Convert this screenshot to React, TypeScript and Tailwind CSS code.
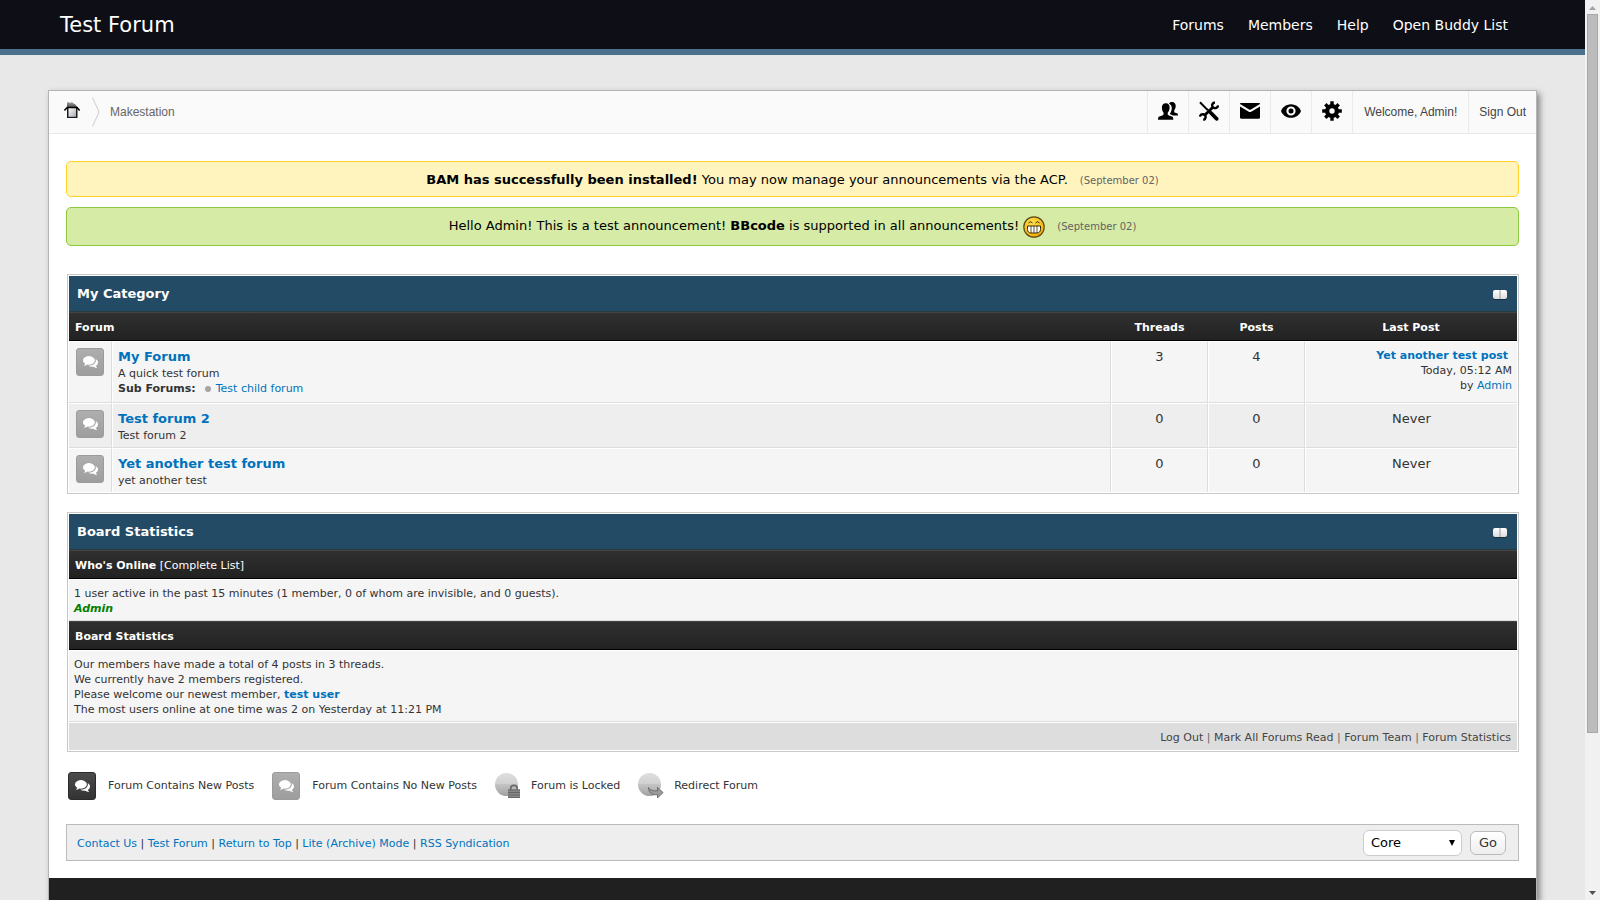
import type { ReactNode } from "react";

const link = "text-[#0072bc] hover:underline";

function UsersIcon() {
  return (
    <svg viewBox="0 0 20 20" className="size-5" fill="#000" aria-hidden="true">
      <path d="M7.8 2.2c2.6 0 3.9 1.8 3.8 4.4 0 2.2-.9 4.1-1.9 5.1v1.4c0 .7.4 1 1.200 1.300l3 1.200c1 .4 1.400 1.100 1.400 3.200H0c0-2.100.4-2.800 1.400-3.200l3-1.200c.8-.3 1.200-.6 1.200-1.300v-1.400c-1-1-1.700-2.900-1.700-5.100 0-2.600 1.300-4.400 3.900-4.400z" />
      <path d="M11 2.700c.8-1.200 1.800-1.600 3.100-1.600 2.400 0 3.700 1.700 3.600 4 0 2-.8 3.400-1.500 4.300v1.300c0 .6.5.8 1.100 1l1.600.6c.8.300 1.100.900 1.100 2.200h-5.200c-.8-.6-1.800-.9-2.700-1.200v-1c1.100-1.500 1.700-3.200 1.700-5.300 0-2-.9-3.500-2.800-4.300z" />
    </svg>
  );
}

function ToolsIcon() {
  return (
    <svg viewBox="0 0 20 20" className="size-5" fill="none" stroke="#000" aria-hidden="true">
      <path d="M1 1.300l7.700 7.800" strokeWidth="2" />
      <path d="M12 12l5.600 5.800" strokeWidth="3.800" strokeLinecap="round" />
      <path d="M8 8l4 4" strokeWidth="1.400" />
      <path d="M6.400 13.600l7.200-7.200" strokeWidth="2.800" />
      <path d="M15.900 1.500c-2 .3-3.100 1.900-2.600 3.700.4 1.600 2.400 2.400 4.200 1.500 1-.5 1.500-1.300 1.600-2.300" strokeWidth="2.400" />
      <path d="M.9 15.600c.3-1.400 1.400-2.400 2.900-2.400 1.800 0 3 1.500 2.800 3.100-.2 1.400-1 2.300-2.300 2.700" strokeWidth="2.400" />
    </svg>
  );
}

function MailIcon() {
  return (
    <svg viewBox="0 0 20 20" className="size-5" fill="#000" aria-hidden="true">
      <path d="M.6 2h18.800c.6 0 .8.800.2 1.200l-8.700 5.300c-.6.3-1.200.3-1.800 0L.4 3.200C-.2 2.800 0 2 .6 2z" />
      <path d="M0 5.400l8.800 5.300c.8.400 1.600.4 2.400 0L20 5.400v11.100c0 .8-.4 1.200-1.200 1.200H1.200c-.8 0-1.200-.4-1.200-1.200z" />
    </svg>
  );
}

function EyeIcon() {
  return (
    <svg viewBox="0 0 20 20" className="size-5" fill="#000" aria-hidden="true">
      <path
        fillRule="evenodd"
        d="M10 3.200c5.300 0 9 3.900 9.800 6.400.1.300.1.500 0 .8-.8 2.500-4.500 6.400-9.800 6.400S1 12.900.2 10.400a1 1 0 010-.8C1 7.100 4.700 3.200 10 3.200zm0 2.200a4.600 4.600 0 100 9.200 4.600 4.600 0 000-9.200z"
      />
      <circle cx="10" cy="10" r="2.500" />
    </svg>
  );
}

function GearIcon() {
  return (
    <svg viewBox="0 0 20 20" className="size-5" aria-hidden="true">
      <g stroke="#000" strokeWidth="3.400">
        <path d="M10 .2v19.600M.2 10h19.600" />
        <path d="M3.300 3.300l13.400 13.400M3.300 16.700L16.700 3.300" />
      </g>
      <circle cx="10" cy="10" r="7" fill="#000" />
      <circle cx="10" cy="10" r="2.700" fill="#fafafa" />
    </svg>
  );
}

function HomeIcon() {
  return (
    <svg viewBox="0 0 16 16" className="size-4" aria-hidden="true">
      <defs>
        <linearGradient id="wall" x1="0" y1="0" x2="1" y2="1">
          <stop offset="0" stopColor="#fff" />
          <stop offset="1" stopColor="#a4aab2" />
        </linearGradient>
        <linearGradient id="roof" x1="0" y1="0" x2="0" y2="1">
          <stop offset="0" stopColor="#a0a0a0" />
          <stop offset="1" stopColor="#444" />
        </linearGradient>
      </defs>
      <path d="M3 5h10.500v11H3z" fill="#1c1c1c" />
      <path d="M4.500 6h7.500v8.800H4.500z" fill="url(#wall)" />
      <path d="M3 .5L4.500 0 6 1l2-1 1.500 1.500L11 2l3 4H3z" fill="url(#roof)" />
      <path d="M.4 8.500L3.200 5.600h9.800l2.600 2.900" fill="none" stroke="#000" strokeWidth="1.500" />
    </svg>
  );
}

function GrinIcon() {
  return (
    <svg viewBox="0 0 22 22" className="-my-2 inline size-[22px] align-middle" role="img" aria-label="Big Grin">
      <defs>
        <radialGradient id="face" cx=".4" cy=".3" r=".8">
          <stop offset="0" stopColor="#ffe14a" />
          <stop offset="1" stopColor="#f5a800" />
        </radialGradient>
      </defs>
      <circle cx="11" cy="11" r="10.200" fill="url(#face)" stroke="#5c4a17" strokeWidth="1.200" />
      <path d="M5.500 7l2-1.300L9.500 7M12.500 7l2-1.300 2 1.300" fill="none" stroke="#3a2c05" />
      <path d="M4.500 10h13v3.500c0 2.200-1.600 3.500-3.500 3.500H8c-2 0-3.500-1.300-3.500-3.500z" fill="#fff" stroke="#3a2c05" />
      <path d="M8 10v7M11 10v7M14 10v7" stroke="#3a2c05" strokeWidth=".8" />
    </svg>
  );
}

function CommentsIcon() {
  return (
    <svg viewBox="0 256 1792 1408" className="h-3 w-[15px]" fill="currentColor" aria-hidden="true">
      <path d="M1408 768q0 139-94 257t-256.500 186.500-353.500 68.500q-86 0-176-16-124 88-278 128-36 9-86 16h-3q-11 0-20.500-8t-11.500-21q-1-3-1-6.500t.5-6.500 2-6l2.500-5 3.500-5.500 4-5 4.500-5 4-4.500q5-6 23-25t26-29.500 22.500-29 25-38.500 20.500-44q-124-72-195-177t-71-224q0-139 94-257t256.500-186.500 353.500-68.500 353.500 68.500 256.500 186.500 94 257zm384 256q0 120-71 224.500t-195 176.500q10 24 20.500 44t25 38.500 22.500 29 26 29.500 23 25q1 1 4 4.500t4.500 5 4 5 3.500 5.500l2.500 5 2 6 .5 6.500-1 6.500q-3 14-13 22t-22 7q-50-7-86-16-154-40-278-128-90 16-176 16-271 0-472-132 58 4 88 4 161 0 309-45t264-129q125-92 192-212t67-254q0-77-23-152 129 71 204 178t75 230z" />
    </svg>
  );
}

function CollapseIcon() {
  return (
    <svg viewBox="0 0 14 10" className="h-[10px] w-[14px]" aria-hidden="true">
      <defs>
        <linearGradient id="knob" x1="0" y1="0" x2="0" y2="1">
          <stop offset="0" stopColor="#fff" />
          <stop offset="1" stopColor="#ddd" />
        </linearGradient>
      </defs>
      <rect x="0" y="1" width="14" height="9" rx="2" fill="#17303f" />
      <rect x="0" y="0" width="14" height="9" rx="2" fill="url(#knob)" />
      <path d="M7 0v9" stroke="#999" />
    </svg>
  );
}

function Ball({ id, children }: { id: string; children: ReactNode }) {
  return (
    <svg viewBox="0 0 26 26" className="size-[26px]" aria-hidden="true">
      <defs>
        <linearGradient id={id} x1="0" y1="0" x2="0" y2="1">
          <stop offset="0" stopColor="#dedede" />
          <stop offset=".45" stopColor="#d2d2d2" />
          <stop offset=".5" stopColor="#c3c3c3" />
          <stop offset="1" stopColor="#a2a2a2" />
        </linearGradient>
      </defs>
      <circle cx="11.500" cy="11.500" r="11.500" fill={`url(#${id})`} />
      {children}
    </svg>
  );
}

function LockedIcon() {
  return (
    <Ball id="locked">
      <path d="M15.800 17v-2c0-1.700 1.300-2.700 3.200-2.700s3.200 1 3.200 2.700v2" fill="none" stroke="#6a6a6a" strokeWidth="1.700" />
      <path d="M13 16.500h12V25H13z" fill="#888" />
      <path d="M13 17h12M13 19.500h12M13 22h12M13 24.500h12" stroke="#666" />
    </Ball>
  );
}

function RedirectIcon() {
  return (
    <Ball id="redirect">
      <path
        d="M10.500 14.500c1.500 2.800 4.500 3.700 9 3.300V14.500l5.500 5-5.500 5.500v-3.200c-5 .2-9-1.300-9-7.300z"
        fill="#9a9a9a"
        stroke="#666"
        strokeWidth=".9"
      />
    </Ball>
  );
}

function StatusIcon({ unread = false }: { unread?: boolean }) {
  const tone = unread
    ? "border-[#2b2b2b] from-[#4b4b4b] to-[#333333]"
    : "border-[#9b9b9b] from-[#aeaeae] to-[#9e9e9e]";
  return (
    <span className={`flex size-7 items-center justify-center rounded-[3px] border bg-linear-to-b text-white ${tone}`}>
      <CommentsIcon />
    </span>
  );
}

function Announcement({ tone, date, children }: { tone: string; date: string; children: ReactNode }) {
  return (
    <div className={`rounded-[5px] border px-2 text-center text-[13px] leading-[20px] text-black ${tone}`}>
      {children}
      <span className="ml-3 text-[10px] leading-none text-[#636363]">({date})</span>
    </div>
  );
}

function TitleBar({ span, children }: { span: number; children: ReactNode }) {
  return (
    <tr>
      <th colSpan={span} className="border-b border-[#263c40] bg-[#244b65] px-2 text-left text-[13px] text-white">
        <div className="flex h-[35px] items-center justify-between">
          <span>{children}</span>
          <button type="button" aria-label="Collapse" className="mr-[2px] mt-[3px]">
            <CollapseIcon />
          </button>
        </div>
      </th>
    </tr>
  );
}

const bar =
  "border-t border-b border-t-[#444] border-b-black bg-linear-to-b from-[#303030] to-[#222] px-[6px] pt-[7px] pb-[5px] text-white";
const cell = "border-t border-t-white border-b-[#ddd] px-[5px] pt-[6px] pb-1 align-top";

type Forum = { name: string; text: string; child?: string; threads: number; posts: number };

const forums: Forum[] = [
  { name: "My Forum", text: "A quick test forum", child: "Test child forum", threads: 3, posts: 4 },
  { name: "Test forum 2", text: "Test forum 2", threads: 0, posts: 0 },
  { name: "Yet another test forum", text: "yet another test", threads: 0, posts: 0 },
];

function ForumRow({ forum, index }: { forum: Forum; index: number }) {
  const bottom = index < forums.length - 1 ? "border-b" : "";
  const shared = `${cell} ${bottom}`;
  const inner = "border-l border-l-white";
  const right = "border-r border-r-[#ddd]";
  return (
    <tr className={index % 2 ? "bg-[#eeeeee]" : "bg-[#f5f5f5]"}>
      <td className={`${shared} ${right}`}>
        <div className="flex justify-center">
          <StatusIcon />
        </div>
      </td>
      <td className={`${shared} ${inner} ${right}`}>
        <a href="#" className={`block text-[13px] leading-[18px] font-bold ${link}`}>
          {forum.name}
        </a>
        <div>{forum.text}</div>
        {forum.child && (
          <div className="mb-[2px] flex items-center gap-[9px]">
            <strong>Sub Forums:</strong>
            <span className="flex items-center gap-[5px]">
              <span className="size-[6px] rounded-full bg-[#a5a5a5]" />
              <a href="#" className={link}>
                {forum.child}
              </a>
            </span>
          </div>
        )}
      </td>
      <td className={`${shared} ${inner} ${right} text-center text-[13px] leading-[18px]`}>{forum.threads}</td>
      <td className={`${shared} ${inner} ${right} text-center text-[13px] leading-[18px]`}>{forum.posts}</td>
      {forum.child ? (
        <td className={`${shared} ${inner} text-right`}>
          <a href="#" className={`mr-1 font-bold ${link}`}>
            Yet another test post
          </a>
          <br />
          Today, 05:12 AM
          <br />
          by{" "}
          <a href="#" className={link}>
            Admin
          </a>
        </td>
      ) : (
        <td className={`${shared} ${inner} text-center text-[13px] leading-[18px]`}>Never</td>
      )}
    </tr>
  );
}

function LinkList({ items, className }: { items: string[]; className: string }) {
  return (
    <>
      {items.map((item, i) => (
        <span key={item}>
          {i > 0 && " | "}
          <a href="#" className={className}>
            {item}
          </a>
        </span>
      ))}
    </>
  );
}

const tools = [
  { label: "Buddies", icon: <UsersIcon /> },
  { label: "Moderation", icon: <ToolsIcon /> },
  { label: "Messages", icon: <MailIcon /> },
  { label: "New posts", icon: <EyeIcon /> },
  { label: "Settings", icon: <GearIcon /> },
];

const tableClass =
  "w-full table-fixed border-separate border-spacing-0 border border-[#c8c8c8] bg-white p-px";

export default function App() {
  return (
    <div className="flex h-screen bg-[#e8e8e8] font-['DejaVu_Sans',sans-serif] text-[11px] leading-[15px] text-[#333]">
      <div className="flex min-w-0 flex-1 flex-col overflow-hidden">
        <header className="flex h-[55px] shrink-0 items-center justify-between border-b-6 border-[#4a708b] bg-[#0d0e16] pr-[77px] pl-[60px] text-white">
          <a href="#" className="text-[21px] leading-6">
            Test Forum
          </a>
          <nav className="flex gap-6 text-[14px] leading-5">
            <a href="#">Forums</a>
            <a href="#">Members</a>
            <a href="#">Help</a>
            <a href="#">Open Buddy List</a>
          </nav>
        </header>

        <main className="mx-12 mt-[35px] flex flex-1 flex-col border border-b-0 border-[#b5b5b5] bg-white shadow-[3px_3px_6px_#888]">
          <div className="flex h-[43px] shrink-0 justify-between border-b border-[#eaeaea] bg-[#fafafa] font-['Liberation_Sans',sans-serif] text-[12px]">
            <div className="flex items-center pl-[15px] text-[#666]">
              <a href="#" aria-label="Home" className="pb-[5px]">
                <HomeIcon />
              </a>
              <svg viewBox="0 0 8 30" className="ml-3 h-[30px] w-2" fill="none" stroke="#ccc" aria-hidden="true">
                <path d="M.5.500L7 15 .5 29.500" />
              </svg>
              <a href="#" className="ml-[10px]">
                Makestation
              </a>
            </div>
            <div className="flex text-[#444]">
              {tools.map((tool) => (
                <a
                  key={tool.label}
                  href="#"
                  aria-label={tool.label}
                  className="flex items-center border-l border-[#eaeaea] px-[10px] pb-[2px]"
                >
                  {tool.icon}
                </a>
              ))}
              <a href="#" className="flex items-center border-l border-[#eaeaea] px-[11px]">
                Welcome, Admin!
              </a>
              <a href="#" className="flex items-center border-l border-[#eaeaea] px-[10px]">
                Sign Out
              </a>
            </div>
          </div>

          <div className="px-[17px] pt-[27px] pb-[17px]">
            <Announcement tone="border-[#ffd324] bg-[#fff4be] pt-2 pb-[6px]" date="September 02">
              <strong>BAM has successfully been installed!</strong> You may now manage your announcements via the ACP.
            </Announcement>
            <div className="h-[10px]" />
            <Announcement tone="border-[#8dc93e] bg-[#d6eba5] pt-2 pb-[9px]" date="September 02">
              Hello Admin! This is a test announcement! <strong>BBcode</strong> is supported in all announcements!{" "}
              <GrinIcon />
            </Announcement>

            <div className="mt-7 ml-px">
              <table className={tableClass}>
                <colgroup>
                  <col className="w-[43px]" />
                  <col />
                  <col className="w-[97px]" />
                  <col className="w-[97px]" />
                  <col className="w-[212px]" />
                </colgroup>
                <thead>
                  <TitleBar span={5}>My Category</TitleBar>
                  <tr>
                    <th colSpan={2} className={`${bar} text-left`}>
                      Forum
                    </th>
                    <th className={bar}>Threads</th>
                    <th className={bar}>Posts</th>
                    <th className={bar}>Last Post</th>
                  </tr>
                </thead>
                <tbody>
                  {forums.map((forum, i) => (
                    <ForumRow key={forum.name} forum={forum} index={i} />
                  ))}
                </tbody>
              </table>

              <table className={`${tableClass} mt-[18px]`}>
                <thead>
                  <TitleBar span={1}>Board Statistics</TitleBar>
                </thead>
                <tbody>
                  <tr>
                    <td className={bar}>
                      <strong>Who's Online</strong> [<a href="#">Complete List</a>]
                    </td>
                  </tr>
                  <tr>
                    <td className={`${cell} border-b bg-[#f5f5f5]`}>
                      1 user active in the past 15 minutes (1 member, 0 of whom are invisible, and 0 guests).
                      <br />
                      <a href="#" className="font-bold text-[#008000] italic">
                        Admin
                      </a>
                    </td>
                  </tr>
                  <tr>
                    <th className={`${bar} text-left`}>Board Statistics</th>
                  </tr>
                  <tr>
                    <td className={`${cell} border-b bg-[#f5f5f5]`}>
                      Our members have made a total of 4 posts in 3 threads.
                      <br />
                      We currently have 2 members registered.
                      <br />
                      Please welcome our newest member,{" "}
                      <a href="#" className={`font-bold ${link}`}>
                        test user
                      </a>
                      <br />
                      The most users online at one time was 2 on Yesterday at 11:21 PM
                    </td>
                  </tr>
                </tbody>
                <tfoot>
                  <tr>
                    <td className="border-t border-white bg-[#ddd] px-[6px] pt-[7px] pb-[5px] text-right text-[#666]">
                      <LinkList
                        items={["Log Out", "Mark All Forums Read", "Forum Team", "Forum Statistics"]}
                        className="text-[#444]"
                      />
                    </td>
                  </tr>
                </tfoot>
              </table>

              <ul className="mt-[19px] flex h-[29px] items-center gap-[18px] pl-px">
                <li className="flex items-center gap-3">
                  <StatusIcon unread />
                  Forum Contains New Posts
                </li>
                <li className="flex items-center gap-3">
                  <StatusIcon />
                  Forum Contains No New Posts
                </li>
                <li className="flex items-center gap-[10px]">
                  <LockedIcon />
                  Forum is Locked
                </li>
                <li className="flex items-center gap-[10px]">
                  <RedirectIcon />
                  Redirect Forum
                </li>
              </ul>
            </div>

            <div className="mt-6 flex h-[37px] items-center justify-between border border-[#bbb] bg-[#eee] pr-3 pl-[10px]">
              <div className="pt-[2px]">
                <LinkList
                  items={["Contact Us", "Test Forum", "Return to Top", "Lite (Archive) Mode", "RSS Syndication"]}
                  className={link}
                />
              </div>
              <form className="flex items-center gap-2" onSubmit={(e) => e.preventDefault()}>
                <div className="relative">
                  <select
                    aria-label="Theme"
                    className="h-[26px] w-[99px] appearance-none rounded-[6px] border border-[#ccc] bg-white px-[7px] text-[13px] text-black"
                  >
                    <option>Core</option>
                  </select>
                  <svg
                    viewBox="0 0 6 6"
                    className="pointer-events-none absolute top-[10px] right-[7px] size-[6px]"
                    aria-hidden="true"
                  >
                    <path d="M0 0h6L3 6z" fill="#000" />
                  </svg>
                </div>
                <button
                  type="submit"
                  className="h-6 w-9 rounded-[6px] border border-[#bbb] bg-linear-to-b from-white to-[#eee] text-[13px]"
                >
                  Go
                </button>
              </form>
            </div>
          </div>
          <footer className="flex-1 bg-[#202020]" />
        </main>
      </div>

      <div className="flex w-[15px] shrink-0 flex-col items-center bg-[#f1f1f1]" aria-hidden="true">
        <svg viewBox="0 0 15 14" className="h-[14px] w-[15px] shrink-0">
          <path d="M4 10l3.500-4 3.500 4z" fill="#a3a3a3" />
        </svg>
        <div className="flex w-full flex-1 flex-col items-center">
          <div className="h-[82.5%] w-[11px] border border-[#a8a8a8] bg-[#bcbcbc]" />
        </div>
        <svg viewBox="0 0 15 14" className="h-[14px] w-[15px] shrink-0">
          <path d="M4 5h7L7.500 9z" fill="#505050" />
        </svg>
      </div>
    </div>
  );
}
